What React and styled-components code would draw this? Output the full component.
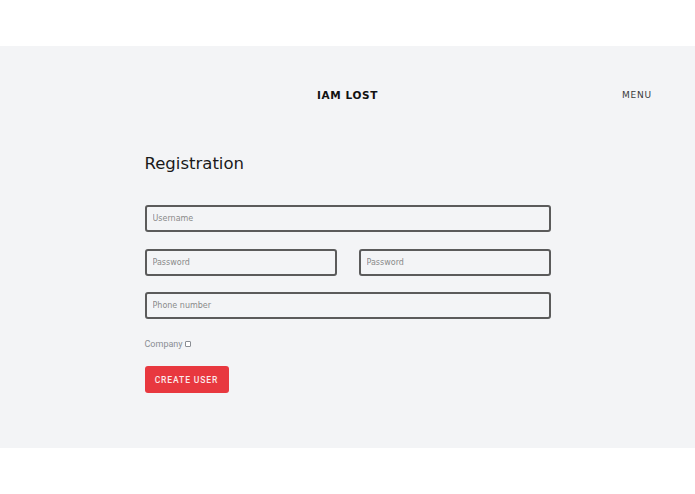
import styled, { createGlobalStyle } from "styled-components";

const GlobalStyle = createGlobalStyle`
    html, body {
        margin: 0;
        padding: 0;
        background: #ffffff;
    }
    body {
        font-family: "Open Sans", "Liberation Sans", sans-serif;
    }
`;

const Page = styled.div`
    width: 100%;
    height: 494px;
    padding-top: 46px;
    box-sizing: border-box;
`;

const Panel = styled.div`
    height: 402px;
    background: #f3f4f6;
    box-sizing: border-box;
    padding-top: 42px;
`;

const Header = styled.header`
    display: grid;
    grid-template-columns: 1fr auto 1fr;
    align-items: center;
    height: 14px;
`;

const Logo = styled.div`
    grid-column: 2;
    font-family: "DejaVu Sans", sans-serif;
    font-weight: 700;
    font-size: 10.5px;
    letter-spacing: 0.6px;
    color: #111;
`;

const Menu = styled.div`
    justify-self: end;
    padding-right: 43px;
    font-family: "DejaVu Sans", sans-serif;
    font-size: 9px;
    letter-spacing: 0.8px;
    color: #3a3a3a;
`;

const Form = styled.form`
    width: 406px;
    margin: 50px auto 0;
    display: flex;
    flex-direction: column;
`;

const Title = styled.h1`
    margin: 0 0 29px;
    font-family: "DejaVu Sans", sans-serif;
    font-weight: 400;
    font-size: 16.5px;
    line-height: 24px;
    color: #1a1a1a;
`;

const Row = styled.div`
    display: flex;
    gap: 22px;
    & + & {
        margin-top: 16.5px;
    }
`;

const Input = styled.input`
    flex: 1;
    min-width: 0;
    height: 27px;
    box-sizing: border-box;
    border: 2px solid #5b5b5b;
    border-radius: 3px;
    background: transparent;
    padding: 0 6px;
    font-family: "DejaVu Sans", sans-serif;
    font-size: 8px;
    color: #333;
    outline: none;
    &::placeholder {
        color: #8a8a8a;
    }
`;

const CheckLabel = styled.label`
    display: flex;
    align-items: center;
    gap: 2px;
    margin-top: 20px;
    font-family: "Roboto", sans-serif;
    font-size: 9px;
    color: #8a8e94;
`;

const Check = styled.input`
    appearance: none;
    margin: 0;
    width: 6px;
    height: 6px;
    border: 1px solid #8a8e94;
    border-radius: 1px;
    background: #fff;
`;

const SubmitButton = styled.button`
    align-self: flex-start;
    margin-top: 17px;
    width: 84px;
    height: 27px;
    border: none;
    border-radius: 3px;
    background: #e8383f;
    color: #fbe9ea;
    font-family: "Roboto", sans-serif;
    font-weight: 500;
    font-size: 8.5px;
    letter-spacing: 0.9px;
    cursor: pointer;
`;

export default function App() {
    return (
        <>
            <GlobalStyle />
            <Page>
                <Panel>
                    <Header>
                        <Logo>IAM LOST</Logo>
                        <Menu>MENU</Menu>
                    </Header>
                    <Form onSubmit={(e) => e.preventDefault()}>
                        <Title>Registration</Title>
                        <Row>
                            <Input placeholder="Username" />
                        </Row>
                        <Row>
                            <Input type="password" placeholder="Password" />
                            <Input type="password" placeholder="Password" />
                        </Row>
                        <Row>
                            <Input placeholder="Phone number" />
                        </Row>
                        <CheckLabel>
                            Company <Check type="checkbox" />
                        </CheckLabel>
                        <SubmitButton type="submit">CREATE USER</SubmitButton>
                    </Form>
                </Panel>
            </Page>
        </>
    );
}
